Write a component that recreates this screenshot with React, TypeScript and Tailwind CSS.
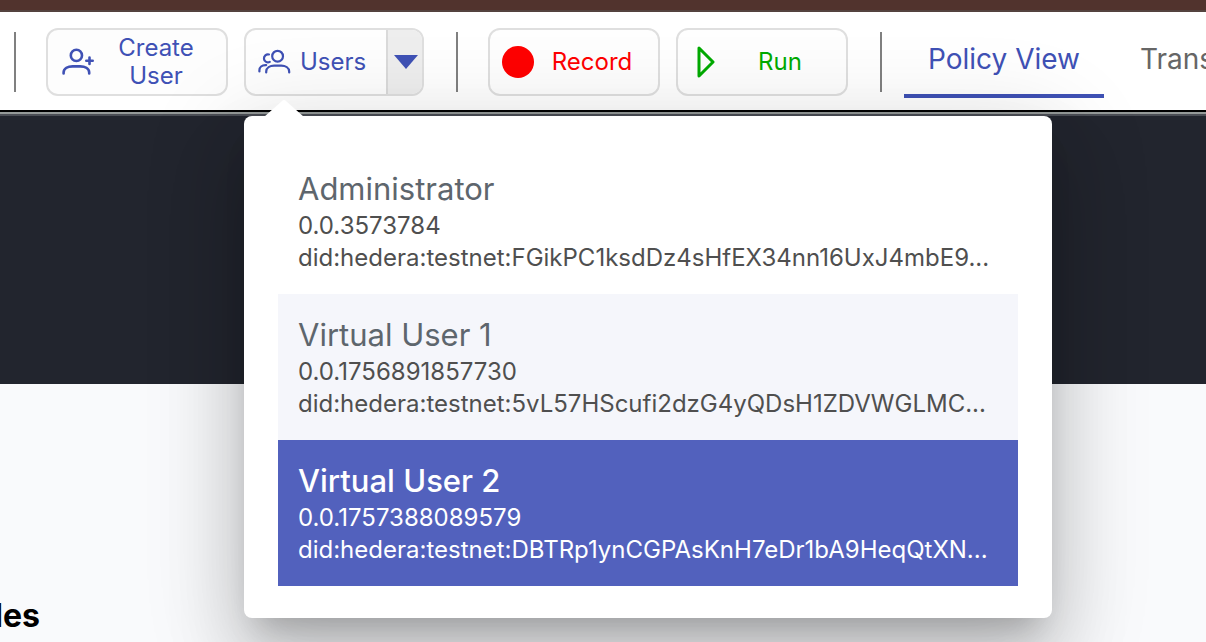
import React from "react";

type User = { name: string; account: string; did: string };

const users: User[] = [
  { name: "Administrator", account: "0.0.3573784", did: "did:hedera:testnet:FGikPC1ksdDz4sHfEX34nn16UxJ4mbE9..." },
  { name: "Virtual User 1", account: "0.0.1756891857730", did: "did:hedera:testnet:5vL57HScufi2dzG4yQDsH1ZDVWGLMC..." },
  { name: "Virtual User 2", account: "0.0.1757388089579", did: "did:hedera:testnet:DBTRp1ynCGPAsKnH7eDr1bA9HeqQtXN..." },
];

const rowStyles = [
  "bg-white text-[#4f4f4f]",
  "bg-[#f5f6fb] text-[#4f4f4f]",
  "bg-[#5261bd] text-white",
];
const nameStyles = ["text-[#5e666d]", "text-[#5e666d]", "text-white font-medium"];

function Divider() {
  return <div className="h-15 w-0.5 shrink-0 bg-[#808080]" />;
}

function CreateUserIcon() {
  return (
    <svg width="34" height="30" viewBox="0 0 34 30" fill="none" stroke="#3f51b5" strokeWidth="2.6" strokeLinecap="round" aria-hidden="true">
      <circle cx="14.4" cy="8.400" r="5.600" />
      <path d="M1.600 26.400v-.8c0-4.200 4.400-6.200 9-6.200h7.600c4.600 0 9 2 9 6.200v.8" />
      <path d="M27.500 10.600v6.400M24.300 13.800h6.400" />
    </svg>
  );
}

function UsersIcon() {
  return (
    <svg width="34" height="26" viewBox="0 0 34 26" fill="none" stroke="#3f51b5" strokeWidth="2.200" strokeLinecap="round" aria-hidden="true">
      <circle cx="19.600" cy="7.200" r="5.400" />
      <path d="M8.200 23.500v-.8c0-4 4-6 8-6h7c4 0 8 2 8 6v.8" />
      <path d="M11 5.500a4 4 0 1 0 .8 7.400" />
      <path d="M1.400 22.500v-1.200c0-3 2.600-5.200 6-5.200h.8" />
    </svg>
  );
}

function UserMenu() {
  return (
    <div className="absolute top-22 left-0 z-10 w-[808px] rounded-lg bg-white px-[34px] py-8 shadow-[0_22px_30px_-14px_rgba(0,0,0,0.2),0_48px_76px_6px_rgba(0,0,0,0.14),0_18px_92px_16px_rgba(0,0,0,0.12)]">
      <svg className="absolute -top-4 left-5" width="40" height="17" viewBox="0 0 40 17" aria-hidden="true">
        <path d="M0 17 18 1Q20 -1 22 1L40 17Z" fill="#fff" />
      </svg>
      <ul>
        {users.map((user, i) => (
          <li key={user.name}>
            <button type="button" className={`block w-full px-5 pt-5 pb-5 text-left text-[24px] leading-8 ${rowStyles[i]}`}>
              <span className={`block text-[31px] leading-[42px] ${nameStyles[i]}`}>{user.name}</span>
              <span className="block">{user.account}</span>
              <span className="block whitespace-nowrap">{user.did}</span>
            </button>
          </li>
        ))}
      </ul>
    </div>
  );
}

export default function App() {
  return (
    <div className="flex min-h-screen flex-col overflow-hidden bg-[#f9fafc] font-['Inter','Liberation_Sans',sans-serif]">
      <div className="h-3 border-b-2 border-[#54433f] bg-[#51332d]" />
      <header className="relative z-10 flex h-[100px] items-start border-b-2 border-black bg-white pt-4 pl-3.5 text-[24px] leading-7 text-[#3f51b5]">
        <div className="flex shrink-0 items-center">
          <Divider />
          <button type="button" className="ml-[30px] flex h-17 w-[182px] items-center rounded-xl border-2 border-[#dfdfdf] bg-[#fdfdfd] pr-1.5 pl-3.5">
            <CreateUserIcon />
            <span className="mx-auto w-20 pr-1">Create User</span>
          </button>
          <div className="relative ml-4 h-17 w-[180px]">
            <div className="flex h-full overflow-hidden rounded-xl border-2 border-[#dfdfdf] bg-[#fefefe]">
              <button type="button" className="flex flex-1 items-center gap-2 pl-3">
                <UsersIcon />
                Users
              </button>
              <button type="button" aria-label="Select user" className="flex w-9 items-center justify-center border-l-2 border-[#dadada] bg-[#eeeeee] pl-0.5">
                <svg width="24" height="14" viewBox="0 0 24 14" aria-hidden="true">
                  <path d="M0 0h24L12 14Z" fill="#3f51b5" />
                </svg>
              </button>
            </div>
            <UserMenu />
          </div>
          <div className="ml-8"><Divider /></div>
          <button type="button" className="ml-[30px] flex h-17 w-[172px] items-center rounded-xl border-2 border-[#dfdfdf] bg-[#fefefe] pl-3 text-[#ff0000]">
            <svg width="32" height="32" viewBox="0 0 32 32" aria-hidden="true"><circle cx="16" cy="16" r="16" fill="#f00" /></svg>
            <span className="flex-1 pr-2">Record</span>
          </button>
          <button type="button" className="ml-4 flex h-17 w-[172px] items-center rounded-xl border-2 border-[#dfdfdf] bg-[#fefefe] pl-3 text-[#0a0]">
            <svg width="32" height="32" viewBox="0 0 32 32" fill="none" stroke="#0a0" strokeWidth="3" strokeLinejoin="round" aria-hidden="true"><path d="M9 2v28l14-14Z" /></svg>
            <span className="flex-1 pr-2">Run</span>
          </button>
          <div className="ml-8"><Divider /></div>
        </div>
        <nav className="ml-[22px] flex min-w-0 flex-1 overflow-hidden text-[28px] leading-8">
          <a href="#policy" className="h-[70px] w-[200px] shrink-0 border-b-4 border-[#3f51b5] pt-[15px] text-center">Policy View</a>
          <a href="#transactions" className="h-[70px] shrink-0 px-9 pt-[15px] text-[#666]">Transactions</a>
        </nav>
      </header>
      <section className="h-68 border-t-2 border-[#959a99] bg-[#22252e]">
        <div className="h-0.5 bg-[#4b4e55]" />
      </section>
      <main className="flex-1 pt-52">
        <h2 className="flex w-10 justify-end overflow-hidden text-[32px] leading-12 font-bold text-black">Roles</h2>
      </main>
    </div>
  );
}
